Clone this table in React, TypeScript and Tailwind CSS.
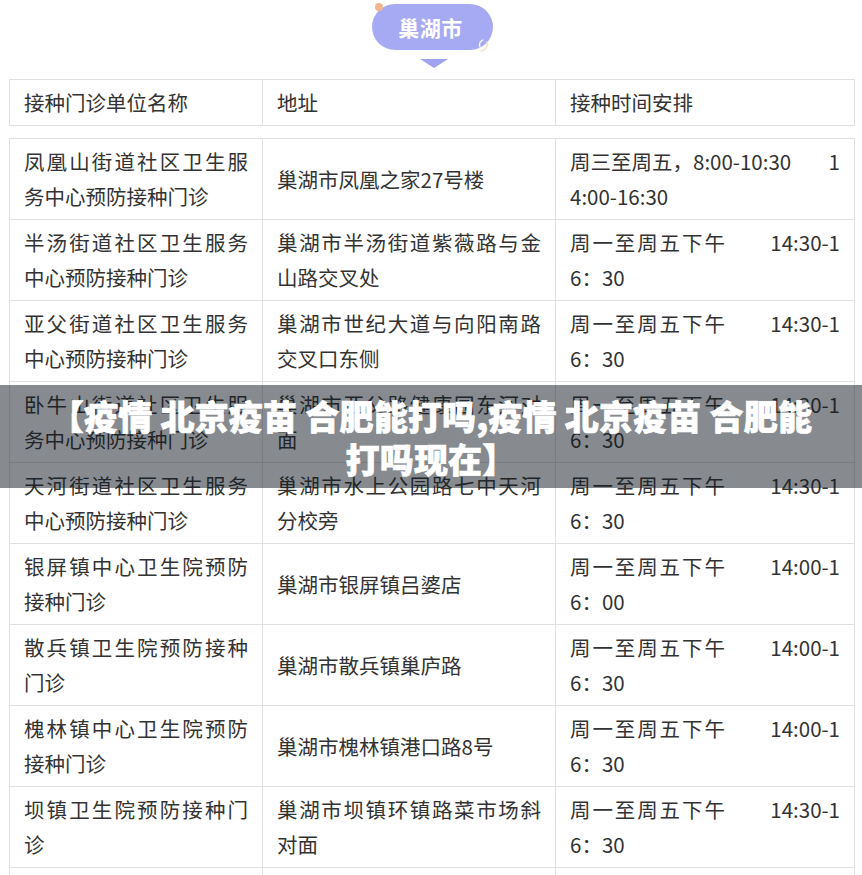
import React from "react";

type Row = {
  name: string[];
  addr: string[];
  time: { l: string; r: string; wide?: boolean };
  time2: string;
};

const rows: Row[] = [
  {
    name: ["凤凰山街道社区卫生服", "务中心预防接种门诊"],
    addr: ["巢湖市凤凰之家27号楼"],
    time: { l: "周三至周五，8:00-10:30", r: "1" },
    time2: "4:00-16:30",
  },
  {
    name: ["半汤街道社区卫生服务", "中心预防接种门诊"],
    addr: ["巢湖市半汤街道紫薇路与金", "山路交叉处"],
    time: { l: "周一至周五下午", r: "14:30-1", wide: true },
    time2: "6：30",
  },
  {
    name: ["亚父街道社区卫生服务", "中心预防接种门诊"],
    addr: ["巢湖市世纪大道与向阳南路", "交叉口东侧"],
    time: { l: "周一至周五下午", r: "14:30-1", wide: true },
    time2: "6：30",
  },
  {
    name: ["卧牛山街道社区卫生服", "务中心预防接种门诊"],
    addr: ["巢湖市亚父路健康园东河对", "面"],
    time: { l: "周一至周五下午", r: "14:30-1", wide: true },
    time2: "6：30",
  },
  {
    name: ["天河街道社区卫生服务", "中心预防接种门诊"],
    addr: ["巢湖市水上公园路七中天河", "分校旁"],
    time: { l: "周一至周五下午", r: "14:30-1", wide: true },
    time2: "6：30",
  },
  {
    name: ["银屏镇中心卫生院预防", "接种门诊"],
    addr: ["巢湖市银屏镇吕婆店"],
    time: { l: "周一至周五下午", r: "14:00-1", wide: true },
    time2: "6：00",
  },
  {
    name: ["散兵镇卫生院预防接种", "门诊"],
    addr: ["巢湖市散兵镇巢庐路"],
    time: { l: "周一至周五下午", r: "14:00-1", wide: true },
    time2: "6：30",
  },
  {
    name: ["槐林镇中心卫生院预防", "接种门诊"],
    addr: ["巢湖市槐林镇港口路8号"],
    time: { l: "周一至周五下午", r: "14:00-1", wide: true },
    time2: "6：30",
  },
  {
    name: ["坝镇卫生院预防接种门", "诊"],
    addr: ["巢湖市坝镇环镇路菜市场斜", "对面"],
    time: { l: "周一至周五下午", r: "14:30-1", wide: true },
    time2: "6：30",
  },
];

function Lines({ lines }: { lines: string[] }) {
  return (
    <>
      {lines.map((t, i) => (
        <div
          key={i}
          className={
            i < lines.length - 1
              ? "whitespace-nowrap text-justify [text-align-last:justify]"
              : "whitespace-nowrap"
          }
        >
          {t}
        </div>
      ))}
    </>
  );
}

const cell =
  "border border-[#e1e1e1] px-[14px] py-[5px] align-middle text-left";

export default function App() {
  return (
    <div
      lang="zh-CN"
      className="relative w-[862px] h-[875px] overflow-hidden bg-white font-['Noto_Sans_CJK_SC','Noto_Sans',sans-serif] text-[#333]"
    >
      {/* bubble */}
      <div className="relative h-[79px]">
        <div className="absolute left-[372px] top-[4px] w-[121px] h-[46px] rounded-full bg-[#a6aaf3] flex items-center justify-center">
          <span className="text-white font-bold text-[21px] leading-none tracking-[0.5px] pr-[4px]">
            巢湖市
          </span>
        </div>
        <div className="absolute left-[375px] top-[3px] w-[8px] h-[8px] rounded-full bg-[#f3b58e]" />
        <svg
          className="absolute left-[472px] top-[34px]"
          width="20"
          height="20"
          viewBox="0 0 20 20"
        >
          <path
            d="M11 6 A5 5 0 0 0 8 13"
            fill="none"
            stroke="#ffffff"
            strokeWidth="1.3"
            strokeLinecap="round"
          />
          <path
            d="M15 8 A7 7 0 0 1 9 17"
            fill="none"
            stroke="#efe2cc"
            strokeWidth="1.6"
            strokeLinecap="round"
          />
        </svg>
        <svg
          className="absolute left-[420px] top-[59px]"
          width="28"
          height="10"
          viewBox="0 0 28 10"
        >
          <path d="M0 0 L28 0 L14 9 Z" fill="#9fa3f0" />
        </svg>
      </div>

      {/* header table */}
      <div className="px-[9px]">
        <table className="table-fixed border-collapse w-[845px] text-[20.5px] leading-[35px]">
          <colgroup>
            <col className="w-[253px]" />
            <col className="w-[293px]" />
            <col className="w-[299px]" />
          </colgroup>
          <tbody>
            <tr>
              <td className={cell}>接种门诊单位名称</td>
              <td className={cell}>地址</td>
              <td className={cell}>接种时间安排</td>
            </tr>
          </tbody>
        </table>

        <div className="h-[12px]" />

        <table className="table-fixed border-collapse w-[845px] text-[20.5px] leading-[35px]">
          <colgroup>
            <col className="w-[253px]" />
            <col className="w-[293px]" />
            <col className="w-[299px]" />
          </colgroup>
          <tbody>
            {rows.map((r, i) => (
              <tr key={i}>
                <td className={cell}>
                  <Lines lines={r.name} />
                </td>
                <td className={cell}>
                  <Lines lines={r.addr} />
                </td>
                <td className={cell}>
                  <div className="flex justify-between whitespace-nowrap">
                    <span className={r.time.wide ? "tracking-[1.9px]" : ""}>
                      {r.time.l}
                    </span>
                    <span>{r.time.r}</span>
                  </div>
                  <div className="whitespace-nowrap">{r.time2}</div>
                </td>
              </tr>
            ))}
            <tr>
              <td className={`${cell} h-[81px]`} />
              <td className={`${cell} h-[81px]`} />
              <td className={`${cell} h-[81px]`} />
            </tr>
          </tbody>
        </table>
      </div>

      {/* overlay title band */}
      <div className="absolute left-0 right-0 top-[385px] h-[103px] bg-[rgba(15,23,31,0.5)] flex flex-col items-center justify-center">
        <div className="whitespace-nowrap text-white font-black text-[34px] leading-[43px] tracking-[0.2px] [-webkit-text-stroke:0.7px_white]">
          【疫情 北京疫苗 合肥能打吗,疫情 北京疫苗 合肥能
        </div>
        <div className="whitespace-nowrap text-white font-black text-[34px] leading-[43px] tracking-[0.2px] [-webkit-text-stroke:0.7px_white]">
          打吗现在】
        </div>
      </div>
    </div>
  );
}
